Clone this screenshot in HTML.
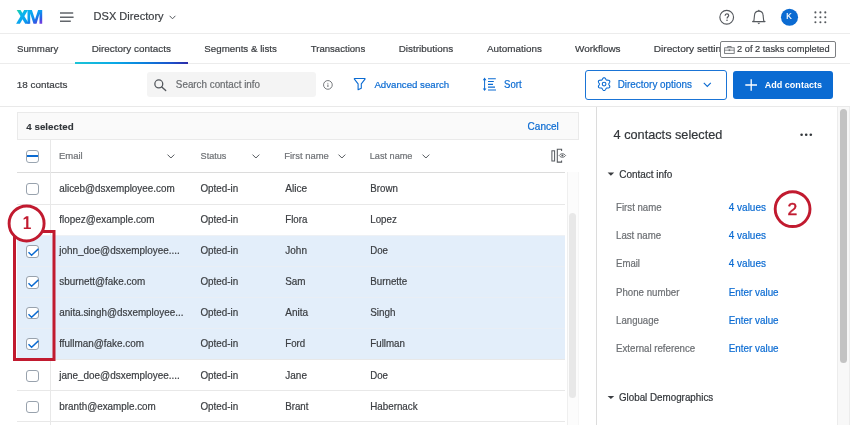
<!DOCTYPE html>
<html><head><meta charset="utf-8">
<style>
*{box-sizing:border-box;margin:0;padding:0}
html,body{width:850px;height:425px;overflow:hidden;background:#fff}
body{position:relative;font-family:"Liberation Sans",sans-serif;color:#32363a}
#root{position:absolute;left:0;top:0;width:850px;height:425px;will-change:transform}
.t{position:absolute;white-space:nowrap;line-height:1;transform-origin:0 0}
.bx{position:absolute}
.hl{position:absolute;height:1px;background:#e6e6e6}
.vl{position:absolute;width:1px;background:#e6e6e6}
.cb{position:absolute;width:12.5px;height:12.5px;border:1px solid #98a2ad;border-radius:3px;background:#fff}
svg{position:absolute;overflow:visible}
.s{left:0;top:0;font-family:'Liberation Sans'}
</style></head><body><div id="root">
<svg style="left:0;top:0" width="50" height="30" viewBox="0 0 50 30">
  <defs><linearGradient id="xmg" gradientUnits="userSpaceOnUse" x1="20" y1="7" x2="34" y2="27">
    <stop offset="0" stop-color="#22d49a"/><stop offset="0.15" stop-color="#12c4c6"/>
    <stop offset="0.3" stop-color="#0ab3ee"/><stop offset="0.62" stop-color="#0a9bef"/>
    <stop offset="0.8" stop-color="#1f6de8"/><stop offset="0.92" stop-color="#3d4fe2"/><stop offset="1" stop-color="#6d3fe0"/></linearGradient></defs>
  <g fill="url(#xmg)">
    <path d="M16.7 9.9 L20.5 9.9 L29 23.8 L25.2 23.8 Z"/>
    <path d="M24.2 9.9 L28 9.9 L19.9 23.8 L16.1 23.8 Z"/>
    <path d="M27.5 9.9 L31.9 9.9 L35 19.6 L38.1 9.9 L42.2 9.9 L42.2 23.8 L39.5 23.8 L39.5 13.8 L36.5 23.8 L33.5 23.8 L30.2 13.6 L30.2 23.8 L27.5 23.8 Z"/>
  </g>
</svg>
<svg style="left:0;top:0" width="80" height="30" viewBox="0 0 80 30">
  <path d="M60 13 L73.2 13 M60 17.2 L73.6 17.2 M60 21.2 L70.8 21.2" stroke="#62666b" stroke-width="1.45"/>
</svg>
<svg class="s" width="850" height="425"><text x="93.59" y="20.20" font-size="11.23" fill="#3a3d41" textLength="70.02" lengthAdjust="spacingAndGlyphs" stroke="#3a3d41" stroke-width="0.2">DSX Directory</text></svg>
<svg style="left:169px;top:15px" width="7" height="5" viewBox="0 0 7 5"><path d="M0.6 0.8 L3.5 3.8 L6.4 0.8" fill="none" stroke="#55595e" stroke-width="1"/></svg>
<svg class="s" width="850" height="425" viewBox="0 0 850 425">
  <circle cx="726.7" cy="17.3" r="6.85" fill="none" stroke="#55595e" stroke-width="1.15"/>
  <path d="M725.1 15.7 C725.1 14.5 725.9 13.8 726.9 13.8 C727.9 13.8 728.7 14.5 728.7 15.4 C728.7 16.7 727.1 16.8 727.1 18.6" fill="none" stroke="#55595e" stroke-width="1.2"/>
  <circle cx="727.0" cy="20.2" r="0.8" fill="#55595e"/>
  <path d="M753.9 20.9 L754.5 15.4 C754.6 12.8 756.4 11.1 758.8 11.1 C761.2 11.1 763 12.8 763.1 15.4 L763.7 20.9 L765 21.6 L752.6 21.6 Z" fill="none" stroke="#55595e" stroke-width="1.1" stroke-linejoin="round"/>
  <circle cx="758.8" cy="10.6" r="0.75" fill="#55595e"/>
  <path d="M757.3 22.8 L760.3 22.8 L758.8 24.3 Z" fill="#55595e"/>
  <circle cx="789.5" cy="17.3" r="8.55" fill="#0b6bd2"/>
  <g fill="#55595e">
  <circle cx="815.4" cy="12.4" r="1.05"/><circle cx="820.4" cy="12.4" r="1.05"/><circle cx="825.3" cy="12.4" r="1.05"/>
  <circle cx="815.4" cy="17.3" r="1.05"/><circle cx="820.4" cy="17.3" r="1.05"/><circle cx="825.3" cy="17.3" r="1.05"/>
  <circle cx="815.4" cy="22.2" r="1.05"/><circle cx="820.4" cy="22.2" r="1.05"/><circle cx="825.3" cy="22.2" r="1.05"/>
  </g>
</svg>
<svg class="s" width="850" height="425"><text x="786.23" y="19.40" font-size="8.14" fill="#fff" textLength="5.47" lengthAdjust="spacingAndGlyphs" stroke="#fff" stroke-width="0.2">K</text></svg>
<div class="hl" style="left:0;top:33px;width:850px;background:#ececec"></div>
<svg class="s" width="850" height="425"><text x="16.96" y="51.60" font-size="9.79" fill="#3a3d41" textLength="41.36" lengthAdjust="spacingAndGlyphs" stroke="#3a3d41" stroke-width="0.2">Summary</text></svg>
<svg class="s" width="850" height="425"><text x="91.69" y="51.60" font-size="9.79" fill="#3a3d41" textLength="79.17" lengthAdjust="spacingAndGlyphs" stroke="#3a3d41" stroke-width="0.2">Directory contacts</text></svg>
<svg class="s" width="850" height="425"><text x="204.36" y="51.60" font-size="9.79" fill="#3a3d41" textLength="72.59" lengthAdjust="spacingAndGlyphs" stroke="#3a3d41" stroke-width="0.2">Segments &amp; lists</text></svg>
<svg class="s" width="850" height="425"><text x="310.69" y="51.60" font-size="9.79" fill="#3a3d41" textLength="54.55" lengthAdjust="spacingAndGlyphs" stroke="#3a3d41" stroke-width="0.2">Transactions</text></svg>
<svg class="s" width="850" height="425"><text x="398.69" y="51.60" font-size="9.79" fill="#3a3d41" textLength="54.47" lengthAdjust="spacingAndGlyphs" stroke="#3a3d41" stroke-width="0.2">Distributions</text></svg>
<svg class="s" width="850" height="425"><text x="486.98" y="51.60" font-size="9.79" fill="#3a3d41" textLength="54.87" lengthAdjust="spacingAndGlyphs" stroke="#3a3d41" stroke-width="0.2">Automations</text></svg>
<svg class="s" width="850" height="425"><text x="574.96" y="51.60" font-size="9.79" fill="#3a3d41" textLength="45.60" lengthAdjust="spacingAndGlyphs" stroke="#3a3d41" stroke-width="0.2">Workflows</text></svg>
<svg class="s" width="850" height="425"><text x="653.77" y="51.60" font-size="9.79" fill="#3a3d41" textLength="78.02" lengthAdjust="spacingAndGlyphs" stroke="#3a3d41" stroke-width="0.2">Directory settings</text></svg>
<div class="hl" style="left:0;top:63px;width:850px;background:#ececec"></div>
<div class="bx" style="left:75px;top:61.6px;width:113px;height:2px;background:linear-gradient(90deg,#1dc4d6,#0aa9e6 35%,#0b82dd 60%,#1c52cb 85%,#2c2aa6)"></div>
<div class="bx" style="left:719.5px;top:41px;width:116.5px;height:17px;background:#fff;border:1px solid #7d7f82;border-radius:2px"></div>
<svg style="left:724px;top:46px" width="11" height="8" viewBox="0 0 11 8">
  <rect x="0.6" y="1.8" width="9.6" height="5.6" fill="none" stroke="#6f7276" stroke-width="0.9"/>
  <path d="M3.6 1.8 L3.6 0.5 L7.2 0.5 L7.2 1.8" fill="none" stroke="#6f7276" stroke-width="0.9"/>
  <path d="M0.6 4.2 L10.2 4.2" stroke="#6f7276" stroke-width="0.8"/>
  <rect x="4.6" y="3.3" width="1.6" height="1.8" fill="#6f7276"/>
</svg>
<svg class="s" width="850" height="425"><text x="737.04" y="51.80" font-size="9.37" fill="#3a3d41" textLength="92.56" lengthAdjust="spacingAndGlyphs" stroke="#3a3d41" stroke-width="0.2">2 of 2 tasks completed</text></svg>
<svg class="s" width="850" height="425"><text x="16.85" y="88.00" font-size="9.95" fill="#3a3d41" textLength="50.51" lengthAdjust="spacingAndGlyphs" stroke="#3a3d41" stroke-width="0.2">18 contacts</text></svg>
<div class="bx" style="left:147px;top:72.3px;width:169px;height:24.7px;background:#f4f4f4;border-radius:3px"></div>
<svg class="s" width="850" height="425" viewBox="0 0 850 425">
  <circle cx="158.8" cy="83.9" r="3.95" fill="none" stroke="#55595e" stroke-width="1.3"/>
  <path d="M161.8 86.9 L165.7 90.6" stroke="#55595e" stroke-width="1.35" stroke-linecap="round"/>
</svg>
<svg class="s" width="850" height="425"><text x="175.86" y="87.80" font-size="9.99" fill="#6a6d70" textLength="84.16" lengthAdjust="spacingAndGlyphs" stroke="#6a6d70" stroke-width="0.2">Search contact info</text></svg>
<svg class="s" width="850" height="425" viewBox="0 0 850 425">
  <circle cx="327.9" cy="84.9" r="4.35" fill="none" stroke="#6f7276" stroke-width="0.95"/>
  <path d="M327.9 84.5 L327.9 86.9" stroke="#6f7276" stroke-width="1.05"/>
  <circle cx="327.9" cy="83.2" r="0.5" fill="#6f7276"/>
</svg>
<svg class="s" width="850" height="425" viewBox="0 0 850 425">
  <path d="M354.6 78.5 L364.8 78.5 Q365.3 78.6 365 79.1 L361.3 83.8 L361.3 88.3 L358.1 89.8 L358.1 83.8 L354.4 79.1 Q354.1 78.6 354.6 78.5 Z" fill="none" stroke="#0b6bd2" stroke-width="1.1" stroke-linejoin="round"/>
</svg>
<svg class="s" width="850" height="425"><text x="374.38" y="88.00" font-size="9.87" fill="#0b6bd2" textLength="74.75" lengthAdjust="spacingAndGlyphs" stroke="#0b6bd2" stroke-width="0.2">Advanced search</text></svg>
<svg class="s" width="850" height="425" viewBox="0 0 850 425">
  <path d="M484.6 79 L484.6 89.5" stroke="#0b6bd2" stroke-width="1.0"/>
  <path d="M482.8 80.2 L484.6 77.5 L486.4 80.2 Z M482.8 88.4 L484.6 91.1 L486.4 88.4 Z" fill="#0b6bd2"/>
  <path d="M488 78.7 L495.8 78.7 M488 81.5 L493.8 81.5 M488 84.3 L493 84.3 M488 87.1 L495 87.1 M488 90 L496 90" stroke="#0b6bd2" stroke-width="1.15"/>
</svg>
<svg class="s" width="850" height="425"><text x="504.07" y="88.00" font-size="10.01" fill="#0b6bd2" textLength="17.50" lengthAdjust="spacingAndGlyphs" stroke="#0b6bd2" stroke-width="0.2">Sort</text></svg>
<div class="bx" style="left:585px;top:70px;width:142px;height:29.5px;border:1px solid #1a74d6;border-radius:3px"></div>
<svg class="s" width="850" height="425" viewBox="0 0 850 425">
  <path d="M604.10 77.70 L604.51 77.78 L604.90 78.00 L605.25 78.34 L605.54 78.74 L605.78 79.15 L605.99 79.53 L606.21 79.83 L606.45 80.03 L606.75 80.14 L607.11 80.17 L607.54 80.17 L608.02 80.18 L608.52 80.23 L608.98 80.36 L609.37 80.58 L609.64 80.90 L609.78 81.30 L609.78 81.75 L609.66 82.21 L609.46 82.66 L609.22 83.08 L609.01 83.45 L608.85 83.79 L608.80 84.10 L608.85 84.41 L609.01 84.75 L609.22 85.12 L609.46 85.54 L609.66 85.99 L609.78 86.45 L609.78 86.90 L609.64 87.30 L609.37 87.62 L608.98 87.84 L608.52 87.97 L608.02 88.02 L607.54 88.03 L607.11 88.03 L606.75 88.06 L606.45 88.17 L606.21 88.37 L605.99 88.67 L605.78 89.05 L605.54 89.46 L605.25 89.86 L604.90 90.20 L604.51 90.42 L604.10 90.50 L603.69 90.42 L603.30 90.20 L602.95 89.86 L602.66 89.46 L602.42 89.05 L602.21 88.67 L601.99 88.37 L601.75 88.17 L601.45 88.06 L601.09 88.03 L600.66 88.03 L600.18 88.02 L599.68 87.97 L599.22 87.84 L598.83 87.62 L598.56 87.30 L598.42 86.90 L598.42 86.45 L598.54 85.99 L598.74 85.54 L598.98 85.12 L599.19 84.75 L599.35 84.41 L599.40 84.10 L599.35 83.79 L599.19 83.45 L598.98 83.08 L598.74 82.66 L598.54 82.21 L598.42 81.75 L598.42 81.30 L598.56 80.90 L598.83 80.58 L599.22 80.36 L599.68 80.23 L600.18 80.18 L600.66 80.17 L601.09 80.17 L601.45 80.14 L601.75 80.03 L601.99 79.83 L602.21 79.53 L602.42 79.15 L602.66 78.74 L602.95 78.34 L603.30 78.00 L603.69 77.78 L604.10 77.70 Z" fill="none" stroke="#0b6bd2" stroke-width="1.1" stroke-linejoin="round"/>
  <circle cx="604.1" cy="84.1" r="1.85" fill="none" stroke="#0b6bd2" stroke-width="1.1"/>
</svg>
<svg class="s" width="850" height="425"><text x="617.69" y="88.20" font-size="10.05" fill="#0b6bd2" textLength="74.37" lengthAdjust="spacingAndGlyphs" stroke="#0b6bd2" stroke-width="0.2">Directory options</text></svg>
<svg style="left:702.5px;top:82px" width="9" height="6" viewBox="0 0 9 6"><path d="M0.8 0.8 L4.3 4.4 L7.8 0.8" fill="none" stroke="#0b6bd2" stroke-width="1.1"/></svg>
<div class="bx" style="left:733px;top:70.5px;width:100.2px;height:28.3px;background:#0b6bd2;border-radius:3px"></div>
<svg style="left:744.5px;top:78.5px" width="13" height="13" viewBox="0 0 13 13"><path d="M6.2 0.3 L6.2 11.8 M0.3 6 L12 6" stroke="#fff" stroke-width="1.3"/></svg>
<svg class="s" width="850" height="425"><text x="764.77" y="88.20" font-size="9.41" fill="#fff" font-weight="bold" textLength="57.20" lengthAdjust="spacingAndGlyphs" stroke="#fff" stroke-width="0.0">Add contacts</text></svg>
<div class="hl" style="left:0;top:106px;width:850px;background:#e9e9e9"></div>
<div class="bx" style="left:17px;top:112px;width:562px;height:28px;background:#fafafa;border:1px solid #eaeaea"></div>
<svg class="s" width="850" height="425"><text x="26.35" y="129.90" font-size="9.92" fill="#32363a" font-weight="bold" textLength="47.29" lengthAdjust="spacingAndGlyphs" stroke="#32363a" stroke-width="0.1">4 selected</text></svg>
<svg class="s" width="850" height="425"><text x="527.59" y="129.80" font-size="10.02" fill="#0b6bd2" textLength="31.18" lengthAdjust="spacingAndGlyphs" stroke="#0b6bd2" stroke-width="0.2">Cancel</text></svg>
<div class="cb" style="left:26.3px;top:150px;border-color:#9aa5b1"></div>
<div class="bx" style="left:27.3px;top:155.3px;width:10.9px;height:1.9px;background:#0b6bd2"></div>
<svg class="s" width="850" height="425"><text x="58.92" y="158.90" font-size="9.17" fill="#6f7276" textLength="23.72" lengthAdjust="spacingAndGlyphs" stroke="#6f7276" stroke-width="0.2">Email</text></svg>
<svg class="s" width="850" height="425"><text x="200.59" y="158.90" font-size="9.17" fill="#6f7276" textLength="25.74" lengthAdjust="spacingAndGlyphs" stroke="#6f7276" stroke-width="0.2">Status</text></svg>
<svg class="s" width="850" height="425"><text x="284.23" y="158.90" font-size="9.17" fill="#6f7276" textLength="44.59" lengthAdjust="spacingAndGlyphs" stroke="#6f7276" stroke-width="0.2">First name</text></svg>
<svg class="s" width="850" height="425"><text x="369.75" y="158.90" font-size="9.17" fill="#6f7276" textLength="42.66" lengthAdjust="spacingAndGlyphs" stroke="#6f7276" stroke-width="0.2">Last name</text></svg>
<svg style="left:166.8px;top:153.8px" width="8" height="5" viewBox="0 0 8 5"><path d="M0.5 0.6 L3.9 4 L7.3 0.6" fill="none" stroke="#55595e" stroke-width="1"/></svg>
<svg style="left:251.8px;top:153.8px" width="8" height="5" viewBox="0 0 8 5"><path d="M0.5 0.6 L3.9 4 L7.3 0.6" fill="none" stroke="#55595e" stroke-width="1"/></svg>
<svg style="left:337.8px;top:153.8px" width="8" height="5" viewBox="0 0 8 5"><path d="M0.5 0.6 L3.9 4 L7.3 0.6" fill="none" stroke="#55595e" stroke-width="1"/></svg>
<svg style="left:421.8px;top:153.8px" width="8" height="5" viewBox="0 0 8 5"><path d="M0.5 0.6 L3.9 4 L7.3 0.6" fill="none" stroke="#55595e" stroke-width="1"/></svg>
<svg class="s" width="850" height="425" viewBox="0 0 850 425">
  <rect x="551.9" y="150.8" width="2.7" height="10.2" fill="none" stroke="#55595e" stroke-width="1"/>
  <path d="M561.6 150.9 L561.6 149.3 L557.3 149.3 L557.3 162.1 L561.6 162.1 L561.6 160.6" fill="none" stroke="#55595e" stroke-width="1.05"/>
  <path d="M559.2 155.5 C560.2 154.1 561.4 153.7 562.4 153.7 C563.5 153.7 564.6 154.3 565.6 155.5 C564.6 156.7 563.5 157.3 562.4 157.3 C561.4 157.3 560.2 156.9 559.2 155.5 Z" fill="none" stroke="#55595e" stroke-width="0.9"/>
  <circle cx="562.4" cy="155.5" r="1.05" fill="#55595e"/>
</svg>
<div class="hl" style="left:17px;top:171.8px;width:548px;background:#dcdcdc"></div>
<div class="vl" style="left:50px;top:140px;height:285px;background:#e8e8e8"></div>
<div class="bx" style="left:17px;top:235.5px;width:548px;height:123px;background:#e3eefa"></div>
<div class="hl" style="left:17px;top:204.3px;width:548px;background:#e8e8e8"></div>
<div class="hl" style="left:17px;top:235.3px;width:548px;background:#eef1f5"></div>
<div class="hl" style="left:17px;top:265.6px;width:548px;background:#e9eef5"></div>
<div class="hl" style="left:17px;top:296.8px;width:548px;background:#e9eef5"></div>
<div class="hl" style="left:17px;top:327.6px;width:548px;background:#e9eef5"></div>
<div class="hl" style="left:17px;top:358.6px;width:548px;background:#e8e8e8"></div>
<div class="hl" style="left:17px;top:390.2px;width:548px;background:#e8e8e8"></div>
<div class="hl" style="left:17px;top:421.4px;width:548px;background:#e8e8e8"></div>
<div class="cb" style="left:26.3px;top:182.80px"></div>
<svg class="s" width="850" height="425"><text x="59.26" y="191.80" font-size="10.17" fill="#3a3d41" textLength="115.40" lengthAdjust="spacingAndGlyphs" stroke="#3a3d41" stroke-width="0.2">aliceb@dsxemployee.com</text></svg>
<svg class="s" width="850" height="425"><text x="200.46" y="191.80" font-size="10.17" fill="#3a3d41" textLength="37.84" lengthAdjust="spacingAndGlyphs" stroke="#3a3d41" stroke-width="0.2">Opted-in</text></svg>
<svg class="s" width="850" height="425"><text x="285.25" y="191.80" font-size="10.17" fill="#3a3d41" textLength="21.84" lengthAdjust="spacingAndGlyphs" stroke="#3a3d41" stroke-width="0.2">Alice</text></svg>
<svg class="s" width="850" height="425"><text x="370.26" y="191.80" font-size="10.17" fill="#3a3d41" textLength="27.60" lengthAdjust="spacingAndGlyphs" stroke="#3a3d41" stroke-width="0.2">Brown</text></svg>
<div class="cb" style="left:26.3px;top:214.30px"></div>
<svg class="s" width="850" height="425"><text x="59.25" y="223.30" font-size="10.17" fill="#3a3d41" textLength="95.37" lengthAdjust="spacingAndGlyphs" stroke="#3a3d41" stroke-width="0.2">flopez@example.com</text></svg>
<svg class="s" width="850" height="425"><text x="200.46" y="223.30" font-size="10.17" fill="#3a3d41" textLength="37.84" lengthAdjust="spacingAndGlyphs" stroke="#3a3d41" stroke-width="0.2">Opted-in</text></svg>
<svg class="s" width="850" height="425"><text x="285.26" y="223.30" font-size="10.17" fill="#3a3d41" textLength="22.12" lengthAdjust="spacingAndGlyphs" stroke="#3a3d41" stroke-width="0.2">Flora</text></svg>
<svg class="s" width="850" height="425"><text x="370.26" y="223.30" font-size="10.17" fill="#3a3d41" textLength="26.52" lengthAdjust="spacingAndGlyphs" stroke="#3a3d41" stroke-width="0.2">Lopez</text></svg>
<div class="cb" style="left:26.3px;top:245.10px"></div>
<svg style="left:27.5px;top:246.80px" width="10" height="9" viewBox="0 0 10 9"><path d="M0.5 5.2 L3.6 8.2 L10.4 1.9" fill="none" stroke="#0b6bd2" stroke-width="1.45"/></svg>
<svg class="s" width="850" height="425"><text x="59.25" y="254.10" font-size="10.17" fill="#3a3d41" textLength="120.48" lengthAdjust="spacingAndGlyphs" stroke="#3a3d41" stroke-width="0.2">john_doe@dsxemployee....</text></svg>
<svg class="s" width="850" height="425"><text x="200.46" y="254.10" font-size="10.17" fill="#3a3d41" textLength="37.84" lengthAdjust="spacingAndGlyphs" stroke="#3a3d41" stroke-width="0.2">Opted-in</text></svg>
<svg class="s" width="850" height="425"><text x="285.25" y="254.10" font-size="10.17" fill="#3a3d41" textLength="21.71" lengthAdjust="spacingAndGlyphs" stroke="#3a3d41" stroke-width="0.2">John</text></svg>
<svg class="s" width="850" height="425"><text x="370.27" y="254.10" font-size="10.17" fill="#3a3d41" textLength="17.72" lengthAdjust="spacingAndGlyphs" stroke="#3a3d41" stroke-width="0.2">Doe</text></svg>
<div class="cb" style="left:26.3px;top:276.00px"></div>
<svg style="left:27.5px;top:277.70px" width="10" height="9" viewBox="0 0 10 9"><path d="M0.5 5.2 L3.6 8.2 L10.4 1.9" fill="none" stroke="#0b6bd2" stroke-width="1.45"/></svg>
<svg class="s" width="850" height="425"><text x="59.25" y="285.00" font-size="10.17" fill="#3a3d41" textLength="85.91" lengthAdjust="spacingAndGlyphs" stroke="#3a3d41" stroke-width="0.2">sburnett@fake.com</text></svg>
<svg class="s" width="850" height="425"><text x="200.46" y="285.00" font-size="10.17" fill="#3a3d41" textLength="37.84" lengthAdjust="spacingAndGlyphs" stroke="#3a3d41" stroke-width="0.2">Opted-in</text></svg>
<svg class="s" width="850" height="425"><text x="285.26" y="285.00" font-size="10.17" fill="#3a3d41" textLength="20.30" lengthAdjust="spacingAndGlyphs" stroke="#3a3d41" stroke-width="0.2">Sam</text></svg>
<svg class="s" width="850" height="425"><text x="370.26" y="285.00" font-size="10.17" fill="#3a3d41" textLength="36.94" lengthAdjust="spacingAndGlyphs" stroke="#3a3d41" stroke-width="0.2">Burnette</text></svg>
<div class="cb" style="left:26.3px;top:306.90px"></div>
<svg style="left:27.5px;top:308.60px" width="10" height="9" viewBox="0 0 10 9"><path d="M0.5 5.2 L3.6 8.2 L10.4 1.9" fill="none" stroke="#0b6bd2" stroke-width="1.45"/></svg>
<svg class="s" width="850" height="425"><text x="59.26" y="315.90" font-size="10.17" fill="#3a3d41" textLength="124.19" lengthAdjust="spacingAndGlyphs" stroke="#3a3d41" stroke-width="0.2">anita.singh@dsxemployee...</text></svg>
<svg class="s" width="850" height="425"><text x="200.46" y="315.90" font-size="10.17" fill="#3a3d41" textLength="37.84" lengthAdjust="spacingAndGlyphs" stroke="#3a3d41" stroke-width="0.2">Opted-in</text></svg>
<svg class="s" width="850" height="425"><text x="285.25" y="315.90" font-size="10.17" fill="#3a3d41" textLength="22.93" lengthAdjust="spacingAndGlyphs" stroke="#3a3d41" stroke-width="0.2">Anita</text></svg>
<svg class="s" width="850" height="425"><text x="370.26" y="315.90" font-size="10.17" fill="#3a3d41" textLength="25.25" lengthAdjust="spacingAndGlyphs" stroke="#3a3d41" stroke-width="0.2">Singh</text></svg>
<div class="cb" style="left:26.3px;top:337.70px"></div>
<svg style="left:27.5px;top:339.40px" width="10" height="9" viewBox="0 0 10 9"><path d="M0.5 5.2 L3.6 8.2 L10.4 1.9" fill="none" stroke="#0b6bd2" stroke-width="1.45"/></svg>
<svg class="s" width="850" height="425"><text x="59.25" y="346.70" font-size="10.17" fill="#3a3d41" textLength="84.77" lengthAdjust="spacingAndGlyphs" stroke="#3a3d41" stroke-width="0.2">ffullman@fake.com</text></svg>
<svg class="s" width="850" height="425"><text x="200.46" y="346.70" font-size="10.17" fill="#3a3d41" textLength="37.84" lengthAdjust="spacingAndGlyphs" stroke="#3a3d41" stroke-width="0.2">Opted-in</text></svg>
<svg class="s" width="850" height="425"><text x="285.26" y="346.70" font-size="10.17" fill="#3a3d41" textLength="19.91" lengthAdjust="spacingAndGlyphs" stroke="#3a3d41" stroke-width="0.2">Ford</text></svg>
<svg class="s" width="850" height="425"><text x="370.26" y="346.70" font-size="10.17" fill="#3a3d41" textLength="34.73" lengthAdjust="spacingAndGlyphs" stroke="#3a3d41" stroke-width="0.2">Fullman</text></svg>
<div class="cb" style="left:26.3px;top:369.90px"></div>
<svg class="s" width="850" height="425"><text x="59.25" y="378.90" font-size="10.17" fill="#3a3d41" textLength="120.48" lengthAdjust="spacingAndGlyphs" stroke="#3a3d41" stroke-width="0.2">jane_doe@dsxemployee....</text></svg>
<svg class="s" width="850" height="425"><text x="200.46" y="378.90" font-size="10.17" fill="#3a3d41" textLength="37.84" lengthAdjust="spacingAndGlyphs" stroke="#3a3d41" stroke-width="0.2">Opted-in</text></svg>
<svg class="s" width="850" height="425"><text x="285.25" y="378.90" font-size="10.17" fill="#3a3d41" textLength="21.70" lengthAdjust="spacingAndGlyphs" stroke="#3a3d41" stroke-width="0.2">Jane</text></svg>
<svg class="s" width="850" height="425"><text x="370.27" y="378.90" font-size="10.17" fill="#3a3d41" textLength="17.72" lengthAdjust="spacingAndGlyphs" stroke="#3a3d41" stroke-width="0.2">Doe</text></svg>
<div class="cb" style="left:26.3px;top:400.70px"></div>
<svg class="s" width="850" height="425"><text x="59.26" y="409.70" font-size="10.17" fill="#3a3d41" textLength="96.52" lengthAdjust="spacingAndGlyphs" stroke="#3a3d41" stroke-width="0.2">branth@example.com</text></svg>
<svg class="s" width="850" height="425"><text x="200.46" y="409.70" font-size="10.17" fill="#3a3d41" textLength="37.84" lengthAdjust="spacingAndGlyphs" stroke="#3a3d41" stroke-width="0.2">Opted-in</text></svg>
<svg class="s" width="850" height="425"><text x="285.26" y="409.70" font-size="10.17" fill="#3a3d41" textLength="23.22" lengthAdjust="spacingAndGlyphs" stroke="#3a3d41" stroke-width="0.2">Brant</text></svg>
<svg class="s" width="850" height="425"><text x="370.26" y="409.70" font-size="10.17" fill="#3a3d41" textLength="47.37" lengthAdjust="spacingAndGlyphs" stroke="#3a3d41" stroke-width="0.2">Habernack</text></svg>
<div class="bx" style="left:566.5px;top:171.5px;width:12px;height:254px;background:#fcfcfc;border-left:1px solid #efefef;border-right:1px solid #f6f6f6"></div>
<div class="bx" style="left:569.1px;top:212.9px;width:7.2px;height:185px;background:#e8e8e8;border-radius:3.6px"></div>
<div class="vl" style="left:596px;top:107px;height:318px;background:#dcdcdc"></div>
<div class="vl" style="left:837px;top:107px;height:318px;background:#ececec"></div>
<div class="bx" style="left:838px;top:107px;width:11.5px;height:318px;background:#f8f8f8;border-right:1px solid #ececec"></div>
<div class="bx" style="left:840.2px;top:109.1px;width:6.9px;height:254px;background:#c3c3c3;border-radius:3.5px"></div>
<svg class="s" width="850" height="425"><text x="613.61" y="138.60" font-size="12.95" fill="#32363a" textLength="108.71" lengthAdjust="spacingAndGlyphs" stroke="#32363a" stroke-width="0.2">4 contacts selected</text></svg>
<svg style="left:800px;top:133px" width="13" height="4" viewBox="0 0 13 4" fill="#32363a">
  <circle cx="1.6" cy="1.8" r="1.3"/><circle cx="6.2" cy="1.8" r="1.3"/><circle cx="10.8" cy="1.8" r="1.3"/>
</svg>
<svg class="s" width="850" height="425"><path d="M607.6 172.5 L614.2 172.5 L610.9 175.7 Z" fill="#3a3d41"/></svg>
<svg class="s" width="850" height="425"><text x="619.19" y="177.80" font-size="10.09" fill="#32363a" textLength="53.23" lengthAdjust="spacingAndGlyphs" stroke="#32363a" stroke-width="0.2">Contact info</text></svg>
<svg class="s" width="850" height="425"><text x="616.07" y="211.20" font-size="10.02" fill="#6c6f73" textLength="45.56" lengthAdjust="spacingAndGlyphs" stroke="#6c6f73" stroke-width="0.2">First name</text></svg>
<svg class="s" width="850" height="425"><text x="728.75" y="211.20" font-size="10.23" fill="#0b6bd2" textLength="37.21" lengthAdjust="spacingAndGlyphs" stroke="#0b6bd2" stroke-width="0.2">4 values</text></svg>
<svg class="s" width="850" height="425"><text x="616.07" y="239.20" font-size="10.02" fill="#6c6f73" textLength="45.04" lengthAdjust="spacingAndGlyphs" stroke="#6c6f73" stroke-width="0.2">Last name</text></svg>
<svg class="s" width="850" height="425"><text x="728.75" y="239.20" font-size="10.23" fill="#0b6bd2" textLength="37.21" lengthAdjust="spacingAndGlyphs" stroke="#0b6bd2" stroke-width="0.2">4 values</text></svg>
<svg class="s" width="850" height="425"><text x="616.07" y="267.30" font-size="10.02" fill="#6c6f73" textLength="23.94" lengthAdjust="spacingAndGlyphs" stroke="#6c6f73" stroke-width="0.2">Email</text></svg>
<svg class="s" width="850" height="425"><text x="728.75" y="267.30" font-size="10.23" fill="#0b6bd2" textLength="37.21" lengthAdjust="spacingAndGlyphs" stroke="#0b6bd2" stroke-width="0.2">4 values</text></svg>
<svg class="s" width="850" height="425"><text x="616.06" y="295.50" font-size="10.02" fill="#6c6f73" textLength="63.43" lengthAdjust="spacingAndGlyphs" stroke="#6c6f73" stroke-width="0.2">Phone number</text></svg>
<svg class="s" width="850" height="425"><text x="728.76" y="295.50" font-size="10.23" fill="#0b6bd2" textLength="49.85" lengthAdjust="spacingAndGlyphs" stroke="#0b6bd2" stroke-width="0.2">Enter value</text></svg>
<svg class="s" width="850" height="425"><text x="616.07" y="323.70" font-size="10.02" fill="#6c6f73" textLength="42.90" lengthAdjust="spacingAndGlyphs" stroke="#6c6f73" stroke-width="0.2">Language</text></svg>
<svg class="s" width="850" height="425"><text x="728.76" y="323.70" font-size="10.23" fill="#0b6bd2" textLength="49.85" lengthAdjust="spacingAndGlyphs" stroke="#0b6bd2" stroke-width="0.2">Enter value</text></svg>
<svg class="s" width="850" height="425"><text x="616.06" y="351.90" font-size="10.02" fill="#6c6f73" textLength="79.09" lengthAdjust="spacingAndGlyphs" stroke="#6c6f73" stroke-width="0.2">External reference</text></svg>
<svg class="s" width="850" height="425"><text x="728.76" y="351.90" font-size="10.23" fill="#0b6bd2" textLength="49.85" lengthAdjust="spacingAndGlyphs" stroke="#0b6bd2" stroke-width="0.2">Enter value</text></svg>
<svg class="s" width="850" height="425"><path d="M607.6 395.9 L614.2 395.9 L610.9 399.1 Z" fill="#3a3d41"/></svg>
<svg class="s" width="850" height="425"><text x="618.91" y="400.60" font-size="10.01" fill="#32363a" textLength="94.34" lengthAdjust="spacingAndGlyphs" stroke="#32363a" stroke-width="0.2">Global Demographics</text></svg>
<svg style="left:0;top:0" width="850" height="425" viewBox="0 0 850 425">
  <rect x="14.5" y="231.5" width="39.5" height="128" fill="none" stroke="#c11a2f" stroke-width="3"/>
  <circle cx="26.6" cy="223.45" r="17.5" fill="#fff" stroke="#c11a2f" stroke-width="2.9"/>
  <path d="M26.2 216.2 L28.4 216.2 L28.4 227.6 L30.9 227.6 L30.9 229.1 L23.8 229.1 L23.8 227.6 L26.2 227.6 L26.2 218.6 L23.6 219.8 L23.6 218.3 Z" fill="#c11a2f"/>
  <circle cx="792.6" cy="209.1" r="17.4" fill="#fff" stroke="#c11a2f" stroke-width="2.9"/>
</svg>
<svg class="s" width="850" height="425"><text x="787.62" y="215.00" font-size="17.30" fill="#c11a2f" textLength="9.76" lengthAdjust="spacingAndGlyphs" stroke="#c11a2f" stroke-width="0.45">2</text></svg>
</div></body></html>
